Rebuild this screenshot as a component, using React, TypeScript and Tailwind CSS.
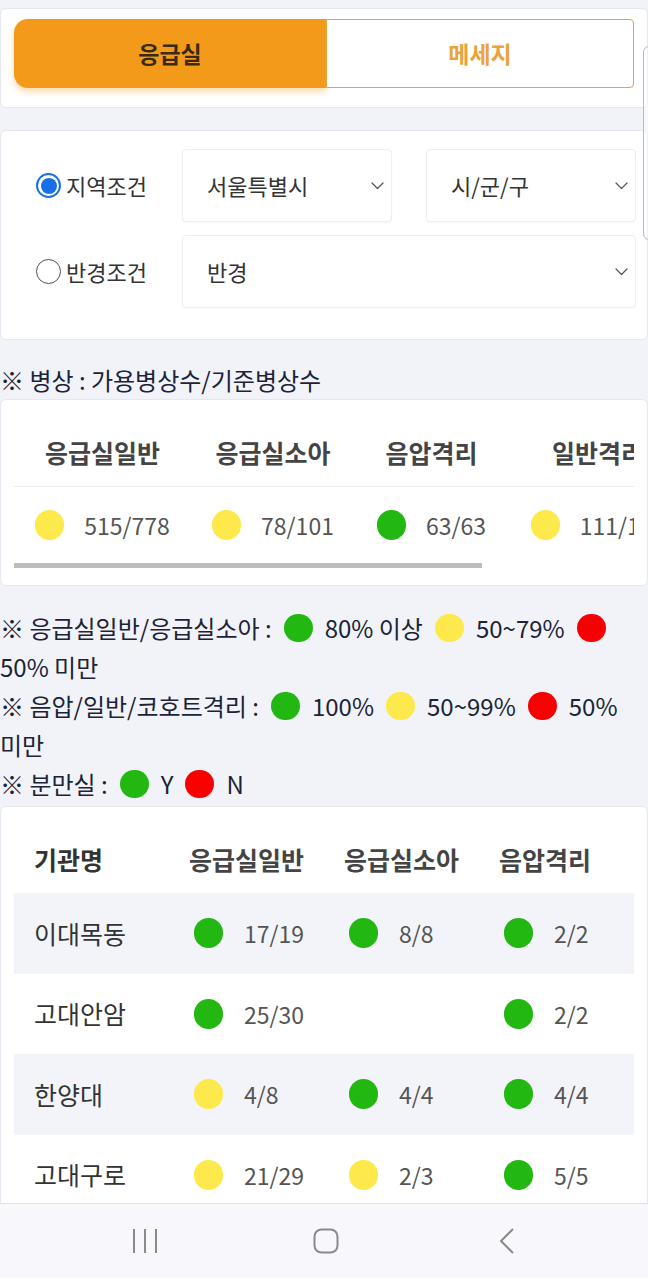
import React from "react";

const GREEN = "bg-[#22b711]";
const YELLOW = "bg-[#fde94b]";
const RED = "bg-[#f80000]";

function Dot({ c, size = "w-[29px] h-[29px]" }: { c: string; size?: string }) {
  return <span className={`inline-block shrink-0 rounded-full ${size} ${c}`} />;
}

function Chevron() {
  return (
    <svg width="13" height="8" viewBox="0 0 13 8" fill="none">
      <polyline points="1,1 6.5,6.5 12,1" stroke="#555" strokeWidth="1.2" strokeLinecap="round" strokeLinejoin="round" />
    </svg>
  );
}

function Select({ label, className }: { label: string; className: string }) {
  return (
    <div
      className={`flex h-[73px] items-center justify-between rounded-[4px] border border-[#eeeef2] bg-white pl-[24px] pr-[7px] text-[22px] text-[#333] shadow-[0_1px_2px_rgba(0,0,0,0.04)] ${className}`}
    >
      <span>{label}</span>
      <Chevron />
    </div>
  );
}

function Radio({ checked }: { checked: boolean }) {
  if (checked) {
    return (
      <span className="flex h-[25px] w-[25px] shrink-0 items-center justify-center rounded-full border-[2px] border-[#1a6fe6] bg-white">
        <span className="h-[16px] w-[16px] rounded-full bg-[#1a6fe6]" />
      </span>
    );
  }
  return <span className="h-[25px] w-[25px] shrink-0 rounded-full border-[1.5px] border-[#555] bg-white" />;
}

const bedCols = [
  { w: "w-[177px]", h: "응급실일반", c: YELLOW, v: "515/778" },
  { w: "w-[164px]", h: "응급실소아", c: YELLOW, v: "78/101" },
  { w: "w-[153px]", h: "음압격리", c: GREEN, v: "63/63" },
  { w: "w-[180px]", h: "일반격리", c: YELLOW, v: "111/128" },
];

type Cell = { c: string; v: string } | null;
const rows: { name: string; cells: Cell[] }[] = [
  { name: "이대목동", cells: [{ c: GREEN, v: "17/19" }, { c: GREEN, v: "8/8" }, { c: GREEN, v: "2/2" }] },
  { name: "고대안암", cells: [{ c: GREEN, v: "25/30" }, null, { c: GREEN, v: "2/2" }] },
  { name: "한양대", cells: [{ c: YELLOW, v: "4/8" }, { c: GREEN, v: "4/4" }, { c: GREEN, v: "4/4" }] },
  { name: "고대구로", cells: [{ c: YELLOW, v: "21/29" }, { c: YELLOW, v: "2/3" }, { c: GREEN, v: "5/5" }] },
];

export default function App() {
  return (
    <div className="relative flex h-[1278px] w-[648px] flex-col overflow-hidden bg-[#f2f3f8] font-['Noto_Sans_CJK_KR',sans-serif]">
      <main className="flex min-h-0 flex-1 flex-col overflow-hidden pt-[8px]">
        {/* Card 1: tabs */}
        <section className="h-[100px] shrink-0 rounded-[6px] border border-[#e7e8ef] bg-white px-[13px] pt-[10px]">
          <div className="flex h-[69px]">
            <div className="flex w-[312px] items-center justify-center rounded-l-[14px] bg-[#f39a1b] text-[23px] font-bold text-[#3a2a12] shadow-[0_4px_6px_rgba(243,154,27,0.35)]">
              응급실
            </div>
            <div className="flex flex-1 items-center justify-center rounded-r-[4px] border border-[#e6a43e] bg-white text-[23px] font-bold text-[#e9a33c]">
              메세지
            </div>
          </div>
        </section>

        {/* Card 2: filters */}
        <section className="mt-[22px] shrink-0 rounded-[6px] border border-[#e7e8ef] bg-white pb-[31px] pl-[35px] pr-[11px] pt-[18px]">
          <div className="flex items-center">
            <div className="flex w-[146px] items-center gap-[5px] text-[22px] text-[#333]">
              <Radio checked />
              <span>지역조건</span>
            </div>
            <Select label="서울특별시" className="w-[210px]" />
            <Select label="시/군/구" className="ml-[34px] flex-1" />
          </div>
          <div className="mt-[13px] flex items-center">
            <div className="flex w-[146px] items-center gap-[5px] text-[22px] text-[#333]">
              <Radio checked={false} />
              <span>반경조건</span>
            </div>
            <Select label="반경" className="flex-1" />
          </div>
        </section>

        <p className="mt-[24px] shrink-0 text-[24px] leading-[32px] text-[#1b2437]">※ 병상 : 가용병상수/기준병상수</p>

        {/* Card 3: bed summary */}
        <section className="mt-[3px] h-[187px] shrink-0 rounded-[6px] border border-[#e7e8ef] bg-white pt-[20px]">
          <div className="mx-[13px] overflow-hidden">
            <div className="flex h-[67px] w-[674px] items-center border-b border-[#ececf0]">
              {bedCols.map((col) => (
                <div key={col.h} className={`${col.w} shrink-0 text-center text-[25px] font-bold text-[#444]`}>
                  {col.h}
                </div>
              ))}
            </div>
            <div className="flex h-[76px] w-[674px] items-center">
              {bedCols.map((col) => (
                <div key={col.h} className={`${col.w} flex shrink-0 items-center justify-center gap-[20px]`}>
                  <Dot c={col.c} size="w-[29px] h-[30px]" />
                  <span className="text-[23px] text-[#555]">{col.v}</span>
                </div>
              ))}
            </div>
            <div className="h-[5px] w-[468px] bg-[#bdbdbd]" />
          </div>
        </section>

        {/* Legend */}
        <div className="mt-[22px] shrink-0 text-[24px] leading-[39px] text-[#1b2437]">
          <div className="flex h-[39px] items-center gap-[12px] whitespace-nowrap">
            <span>※ 응급실일반/응급실소아 :</span>
            <Dot c={GREEN} size="w-[29px] h-[28px]" />
            <span>80% 이상</span>
            <Dot c={YELLOW} size="w-[29px] h-[28px]" />
            <span>50~79%</span>
            <Dot c={RED} size="w-[29px] h-[28px]" />
          </div>
          <div className="h-[39px] whitespace-nowrap">50% 미만</div>
          <div className="flex h-[39px] items-center gap-[12px] whitespace-nowrap">
            <span>※ 음압/일반/코호트격리 :</span>
            <Dot c={GREEN} size="w-[29px] h-[28px]" />
            <span>100%</span>
            <Dot c={YELLOW} size="w-[29px] h-[28px]" />
            <span>50~99%</span>
            <Dot c={RED} size="w-[29px] h-[28px]" />
            <span>50%</span>
          </div>
          <div className="h-[39px] whitespace-nowrap">미만</div>
          <div className="flex h-[39px] items-center gap-[12px] whitespace-nowrap">
            <span>※ 분만실 :</span>
            <Dot c={GREEN} size="w-[29px] h-[28px]" />
            <span>Y</span>
            <Dot c={RED} size="w-[29px] h-[28px]" />
            <span>N</span>
          </div>
        </div>

        {/* Card 4: hospital table */}
        <section className="mt-[3px] shrink-0 rounded-[6px] border border-[#e7e8ef] bg-white px-[13px] pt-[20px]">
          <div className="grid h-[66px] grid-cols-4 items-center">
            {["기관명", "응급실일반", "응급실소아", "음압격리"].map((h) => (
              <div key={h} className={`pl-[20px] text-[25px] font-bold ${h === "기관명" ? "text-[#333]" : "text-[#444]"}`}>
                {h}
              </div>
            ))}
          </div>
          {rows.map((r, i) => (
            <div key={r.name} className={`grid h-[80.5px] grid-cols-4 items-center ${i % 2 === 0 ? "bg-[#f3f4f9]" : "bg-white"}`}>
              <div className="pl-[20px] text-[25px] text-[#333]">{r.name}</div>
              {r.cells.map((cell, j) => (
                <div key={j} className="flex items-center gap-[21px] pl-[25px]">
                  {cell && (
                    <>
                      <Dot c={cell.c} size="w-[29px] h-[30px]" />
                      <span className="text-[23px] text-[#555]">{cell.v}</span>
                    </>
                  )}
                </div>
              ))}
            </div>
          ))}
        </section>
      </main>

      {/* Android nav bar */}
      <nav className="flex h-[75px] shrink-0 items-center justify-center border-t border-[#e3e3ea] bg-[#f8f8fc] pl-[4px]">
        <div className="flex w-[181px] justify-center">
          <svg width="26" height="26" viewBox="0 0 26 26" fill="none">
            <line x1="2" y1="1" x2="2" y2="25" stroke="#8a8a8a" strokeWidth="2" />
            <line x1="13" y1="1" x2="13" y2="25" stroke="#8a8a8a" strokeWidth="2" />
            <line x1="24" y1="1" x2="24" y2="25" stroke="#8a8a8a" strokeWidth="2" />
          </svg>
        </div>
        <div className="flex w-[181px] justify-center">
          <svg width="26" height="26" viewBox="0 0 26 26" fill="none">
            <rect x="1.5" y="1.5" width="23" height="23" rx="7" stroke="#8a8a8a" strokeWidth="2" />
          </svg>
        </div>
        <div className="flex w-[181px] justify-center">
          <svg width="16" height="26" viewBox="0 0 16 26" fill="none">
            <polyline points="14,1 2,13 14,25" stroke="#8a8a8a" strokeWidth="2" strokeLinejoin="round" />
          </svg>
        </div>
      </nav>

      {/* right edge overlay */}
      <div className="absolute left-[643px] top-[46px] h-[194px] w-[20px] rounded-[6px] border border-[#b9b9bf] bg-white/40" />
    </div>
  );
}
